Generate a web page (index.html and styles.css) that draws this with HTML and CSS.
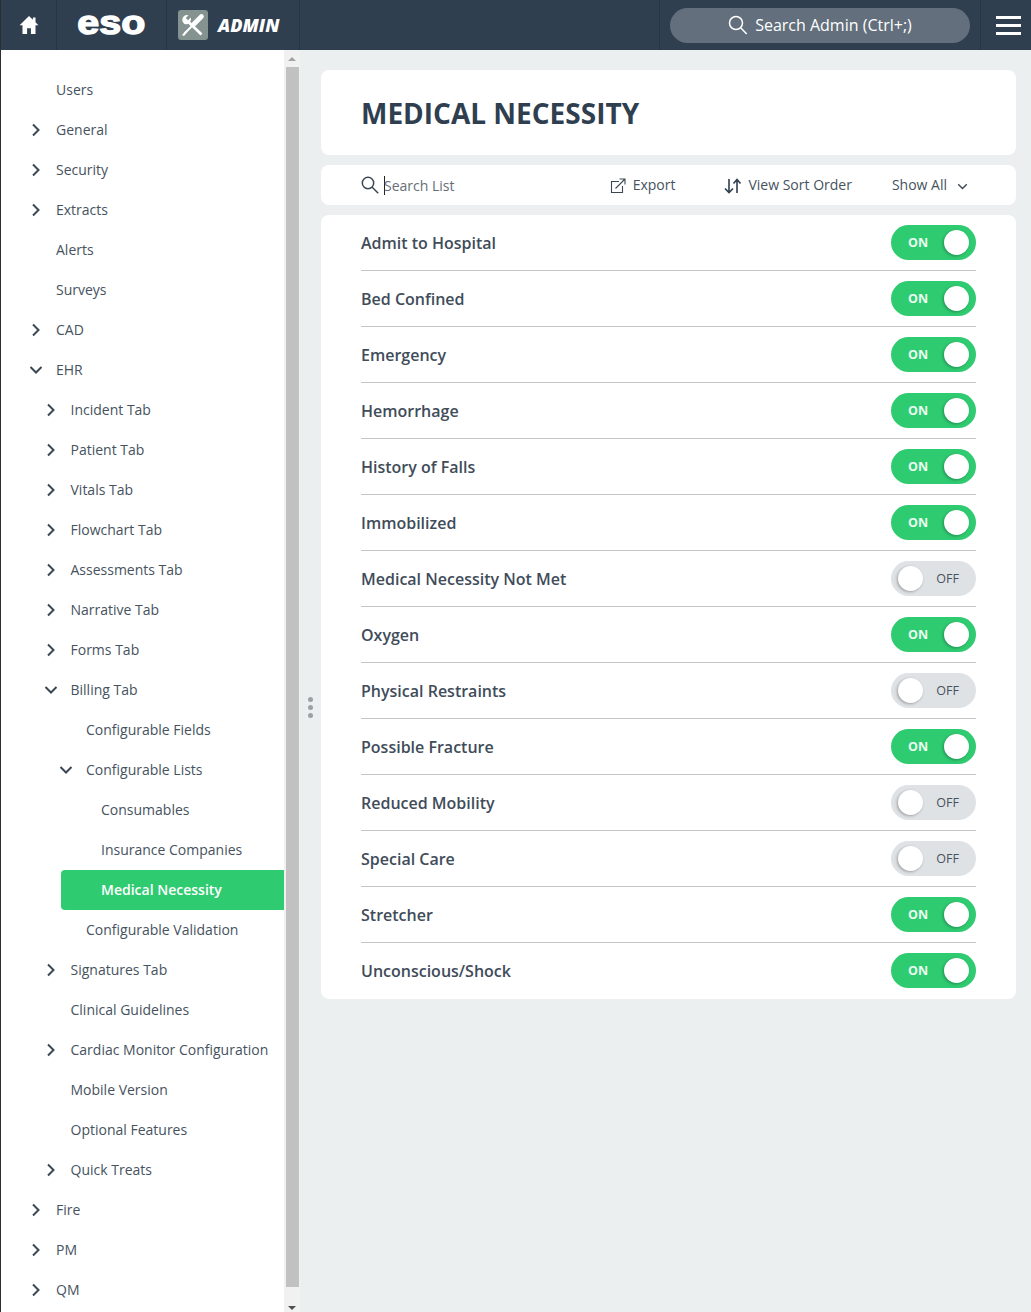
FILE: index.html
```html
<!DOCTYPE html>
<html lang="en">
<head>
<meta charset="utf-8">
<title>Medical Necessity</title>
<link rel="stylesheet" href="styles.css">
</head>
<body>
<svg class="defs" width="0" height="0" aria-hidden="true">
  <symbol id="right" viewBox="0 0 10 14"><path d="M2 1.500 7.500 7 2 12.500" fill="none" stroke="currentColor" stroke-width="2"/></symbol>
  <symbol id="down" viewBox="0 0 14 10"><path d="M1.500 2 7 7.500 12.500 2" fill="none" stroke="currentColor" stroke-width="2"/></symbol>
</svg>
<header class="topbar">
  <a class="cell home"><svg width="20" height="20" viewBox="0 0 20 20"><path d="M10 1 .6 10.200h2.900V19h4.600v-5.800h3.800V19h4.600v-8.800h2.900L16.500 7.300V2.400h-2.600v2.400z" fill="#fff"/></svg></a>
  <a class="cell logo"><span class="eso">eso</span></a>
  <a class="cell admin">
    <span class="tools"><svg width="30" height="30" viewBox="0 0 30 30"><path d="M10.500 5.200 7.800 8l2.200 2.300 2.800-2.700a5 5 0 0 1-6.300 6.300A5 5 0 0 1 5 7.200a5 5 0 0 1 5.500-2z" fill="#fff"/><path d="M10.500 12 23.500 24.500" stroke="#fff" stroke-width="2.800" fill="none"/><path d="M23.500 6.500 15.500 14.500" stroke="#fff" stroke-width="4.600" stroke-linecap="round" fill="none"/><path d="M15.500 14.500 6.500 23.500" stroke="#fff" stroke-width="2" fill="none"/><path d="m7.500 21 1.500 1.500L6 26l-2-1z" fill="#fff"/></svg></span>
    <span class="admin-word">ADMIN</span>
  </a>
  <div class="spacer"></div>
  <div class="cell search-cell">
    <div class="pill">
      <svg width="20" height="20" viewBox="0 0 20 20"><circle cx="8" cy="8" r="6.500" fill="none" stroke="#fff" stroke-width="1.500"/><path d="m12.700 12.700 6 6.300" stroke="#fff" stroke-width="1.500"/></svg>
      <span>Search Admin (Ctrl+;)</span>
    </div>
  </div>
  <a class="burger"><i></i><i></i><i></i></a>
</header>
<div class="body">
  <nav class="sidebar">
    <a class="item l0"><b></b>Users</a>
    <a class="item l0"><b><svg class="cr"><use href="#right"/></svg></b>General</a>
    <a class="item l0"><b><svg class="cr"><use href="#right"/></svg></b>Security</a>
    <a class="item l0"><b><svg class="cr"><use href="#right"/></svg></b>Extracts</a>
    <a class="item l0"><b></b>Alerts</a>
    <a class="item l0"><b></b>Surveys</a>
    <a class="item l0"><b><svg class="cr"><use href="#right"/></svg></b>CAD</a>
    <a class="item l0"><b><svg class="cd"><use href="#down"/></svg></b>EHR</a>
    <a class="item l1"><b><svg class="cr"><use href="#right"/></svg></b>Incident Tab</a>
    <a class="item l1"><b><svg class="cr"><use href="#right"/></svg></b>Patient Tab</a>
    <a class="item l1"><b><svg class="cr"><use href="#right"/></svg></b>Vitals Tab</a>
    <a class="item l1"><b><svg class="cr"><use href="#right"/></svg></b>Flowchart Tab</a>
    <a class="item l1"><b><svg class="cr"><use href="#right"/></svg></b>Assessments Tab</a>
    <a class="item l1"><b><svg class="cr"><use href="#right"/></svg></b>Narrative Tab</a>
    <a class="item l1"><b><svg class="cr"><use href="#right"/></svg></b>Forms Tab</a>
    <a class="item l1"><b><svg class="cd"><use href="#down"/></svg></b>Billing Tab</a>
    <a class="item l2"><b></b>Configurable Fields</a>
    <a class="item l2"><b><svg class="cd"><use href="#down"/></svg></b>Configurable Lists</a>
    <a class="item l3"><b></b>Consumables</a>
    <a class="item l3"><b></b>Insurance Companies</a>
    <a class="item active"><b></b>Medical Necessity</a>
    <a class="item l2"><b></b>Configurable Validation</a>
    <a class="item l1"><b><svg class="cr"><use href="#right"/></svg></b>Signatures Tab</a>
    <a class="item l1"><b></b>Clinical Guidelines</a>
    <a class="item l1"><b><svg class="cr"><use href="#right"/></svg></b>Cardiac Monitor Configuration</a>
    <a class="item l1"><b></b>Mobile Version</a>
    <a class="item l1"><b></b>Optional Features</a>
    <a class="item l1"><b><svg class="cr"><use href="#right"/></svg></b>Quick Treats</a>
    <a class="item l0"><b><svg class="cr"><use href="#right"/></svg></b>Fire</a>
    <a class="item l0"><b><svg class="cr"><use href="#right"/></svg></b>PM</a>
    <a class="item l0"><b><svg class="cr"><use href="#right"/></svg></b>QM</a>
  </nav>
  <div class="scrollbar">
    <span class="arrow up"></span>
    <span class="thumb"></span>
    <span class="arrow dn"></span>
  </div>
  <div class="splitter"><i></i><i></i><i></i></div>
  <main class="main">
    <section class="card title-card"><h1>MEDICAL NECESSITY</h1></section>
    <section class="card toolbar">
      <div class="list-search">
        <svg width="18" height="18" viewBox="0 0 18 18"><circle cx="7" cy="7" r="5.700" fill="none" stroke="#3b4854" stroke-width="1.500"/><path d="m11.200 11.200 6 6" stroke="#3b4854" stroke-width="1.500"/></svg>
        <span class="caret"></span>
        <span class="placeholder">Search List</span>
      </div>
      <a class="tool export">
        <svg width="16" height="16" viewBox="0 0 16 16"><path d="M9 3.500H1.500v11h11V8" fill="none" stroke="#3b4854" stroke-width="1.100"/><path d="M5.500 10.500 14.500 1.500M9.500 1h5.500v5.500" fill="none" stroke="#3b4854" stroke-width="1.100"/></svg>
        <span>Export</span>
      </a>
      <a class="tool sort">
        <svg width="18" height="16" viewBox="0 0 18 16"><path d="M5 1v13M1 10.500 5 14.500l4-4" fill="none" stroke="#2f3f4f" stroke-width="1.600"/><path d="M13 15V2M9.500 5.500 13 1.500l3.500 4" fill="none" stroke="#2f3f4f" stroke-width="1.600"/></svg>
        <span>View Sort Order</span>
      </a>
      <a class="tool show">
        <span>Show All</span>
        <svg width="11" height="7" viewBox="0 0 14 9"><path d="M1.500 1.500 7 7l5.500-5.500" fill="none" stroke="#3b4854" stroke-width="1.800"/></svg>
      </a>
    </section>
    <section class="card list">
      <div class="row"><span>Admit to Hospital</span><div class="toggle on"><em>ON</em><u></u></div></div>
      <div class="row"><span>Bed Confined</span><div class="toggle on"><em>ON</em><u></u></div></div>
      <div class="row"><span>Emergency</span><div class="toggle on"><em>ON</em><u></u></div></div>
      <div class="row"><span>Hemorrhage</span><div class="toggle on"><em>ON</em><u></u></div></div>
      <div class="row"><span>History of Falls</span><div class="toggle on"><em>ON</em><u></u></div></div>
      <div class="row"><span>Immobilized</span><div class="toggle on"><em>ON</em><u></u></div></div>
      <div class="row"><span>Medical Necessity Not Met</span><div class="toggle off"><u></u><em>OFF</em></div></div>
      <div class="row"><span>Oxygen</span><div class="toggle on"><em>ON</em><u></u></div></div>
      <div class="row"><span>Physical Restraints</span><div class="toggle off"><u></u><em>OFF</em></div></div>
      <div class="row"><span>Possible Fracture</span><div class="toggle on"><em>ON</em><u></u></div></div>
      <div class="row"><span>Reduced Mobility</span><div class="toggle off"><u></u><em>OFF</em></div></div>
      <div class="row"><span>Special Care</span><div class="toggle off"><u></u><em>OFF</em></div></div>
      <div class="row"><span>Stretcher</span><div class="toggle on"><em>ON</em><u></u></div></div>
      <div class="row"><span>Unconscious/Shock</span><div class="toggle on"><em>ON</em><u></u></div></div>
    </section>
  </main>
</div>
</body>
</html>
```
FILE: styles.css
```css
* { box-sizing: border-box; }
html, body { margin: 0; height: 100%; overflow: hidden; }
body {
  font-family: "Open Sans", "Liberation Sans", sans-serif;
  font-size: 14px;
  color: #46525e;
  background: #ebeff0;
  border-left: 1px solid #2a2f35;
  display: flex;
  flex-direction: column;
  height: 1312px;
}
.defs { position: absolute; }

/* top bar */
.topbar {
  height: 50px;
  flex: none;
  background: #2f3f50;
  display: flex;
  margin-left: -1px;
  color: #fff;
}
.cell { display: flex; align-items: center; justify-content: center; border-right: 1px solid #263545; }
.home { width: 57px; padding-left: 1px; }
.logo { width: 110px; }
.eso {
  font-family: "Liberation Sans", sans-serif;
  font-weight: 700;
  font-size: 34px;
  line-height: 1;
  -webkit-text-stroke: 1.4px #fff;
  transform: scaleX(1.16);
  display: block;
  margin: -6px 0 0 0;
}
.admin { width: 133px; justify-content: flex-start; padding-left: 11px; gap: 10px; }
.tools { width: 30px; height: 30px; background: #84938f; border-radius: 3px; display: block; }
.tools svg { display: block; }
.admin-word { font-style: italic; font-weight: 800; font-size: 18px; }
.spacer { flex: 1; border-right: 1px solid #263545; }
.search-cell { width: 321px; flex: none; justify-content: flex-start; padding-left: 10px; }
.pill {
  width: 300px;
  height: 35px;
  border-radius: 18px;
  background: #636f7c;
  display: flex;
  align-items: center;
  justify-content: center;
  gap: 7px;
  font-size: 16px;
  color: #fff;
}
.burger { width: 50px; flex: none; display: flex; flex-direction: column; justify-content: center; align-items: flex-end; padding-right: 10px; gap: 5px; }
.burger i { display: block; width: 25px; height: 3px; background: #fff; }

/* body layout */
.body { flex: 1; display: flex; min-height: 0; }

.sidebar { width: 283px; flex: none; background: #fff; padding-top: 20px; overflow: hidden; }
.item { display: flex; align-items: center; height: 40px; white-space: nowrap; padding-bottom: 2px; }
.item b { width: 30px; flex: none; display: flex; align-items: center; font-weight: 400; color: #3b4854; margin-top: 2px; }
.l0 { padding-left: 25px; }
.l1 { padding-left: 39.500px; }
.l1 .cr, .l1 .cd { position: relative; left: .5px; }
.l2 { padding-left: 55px; }
.l3 { padding-left: 70px; }
.cr { width: 10px; height: 14px; margin-left: 5px; }
.cd { width: 14px; height: 10px; margin-left: 3px; }
.active {
  margin-left: 60px;
  padding-left: 10px;
  background: #2fcb71;
  border-radius: 4px 0 0 4px;
  color: #fff;
  font-weight: 600;
}

.scrollbar { width: 16px; flex: none; background: #f1f1f1; display: flex; flex-direction: column; align-items: center; }
.thumb { display: block; width: 13px; height: 1220px; background: #c1c1c1; margin-left: 1px; }
.arrow { display: block; width: 0; height: 0; border-left: 4px solid transparent; border-right: 4px solid transparent; }
.arrow.up { border-bottom: 4px solid #a3a3a3; margin: 7px 0 6px; }
.arrow.dn { border-top: 4px solid #505050; margin-top: 19px; }

.splitter { width: 21px; flex: none; display: flex; flex-direction: column; align-items: center; justify-content: center; gap: 3px; height: 1315px; }
.splitter i { display: block; width: 5px; height: 5px; border-radius: 50%; background: #9aa0a6; }

.main { flex: none; width: 695px; padding-top: 20px; display: flex; flex-direction: column; gap: 10px; }
.card { background: #fff; border-radius: 8px; }
.title-card { height: 85px; padding: 1px 40px 0; display: flex; align-items: center; }
h1 { margin: 0; font-size: 28px; font-weight: 700; color: #2f3f4f; }

.toolbar { height: 40px; padding: 0 48px 0 40px; display: flex; align-items: center; }
.list-search { flex: 1; display: flex; align-items: center; color: #666e76; }
.caret { width: 1px; height: 19px; background: #222; margin-left: 5px; }
.placeholder { margin-left: -1px; }
.tool { display: flex; align-items: center; white-space: nowrap; }
.tool span { position: relative; top: -1px; }
.export { gap: 7px; margin-right: 49px; }
.export svg { margin-top: 2px; }
.sort { gap: 6px; margin-right: 40px; }
.sort svg { margin-top: 1px; }
.show { gap: 10px; }
.show svg { margin-top: 2px; }

.list { padding: 0 40px; }
.row {
  height: 56px;
  display: flex;
  align-items: center;
  justify-content: space-between;
  border-bottom: 1px solid #c4c6c8;
  font-size: 16px;
  font-weight: 600;
  color: #3f4c5a;
}
.row:last-child { border-bottom: 0; }
.toggle {
  width: 85px;
  height: 35px;
  border-radius: 18px;
  display: flex;
  align-items: center;
  justify-content: space-between;
  padding: 0 7px;
  font-size: 12.500px;
  margin-bottom: 1px;
}
.toggle em { font-style: normal; }
.toggle u { display: block; width: 25px; height: 25px; border-radius: 50%; background: #fff; box-shadow: -1px 1px 3px rgba(0,0,0,.3); }
.on { background: #2fcb71; color: #eafff2; font-weight: 700; }
.on em { margin-left: 10px; }
.off { background: #dfe2e5; color: #46525e; font-weight: 400; }
.off em { margin-right: 10px; }
```
